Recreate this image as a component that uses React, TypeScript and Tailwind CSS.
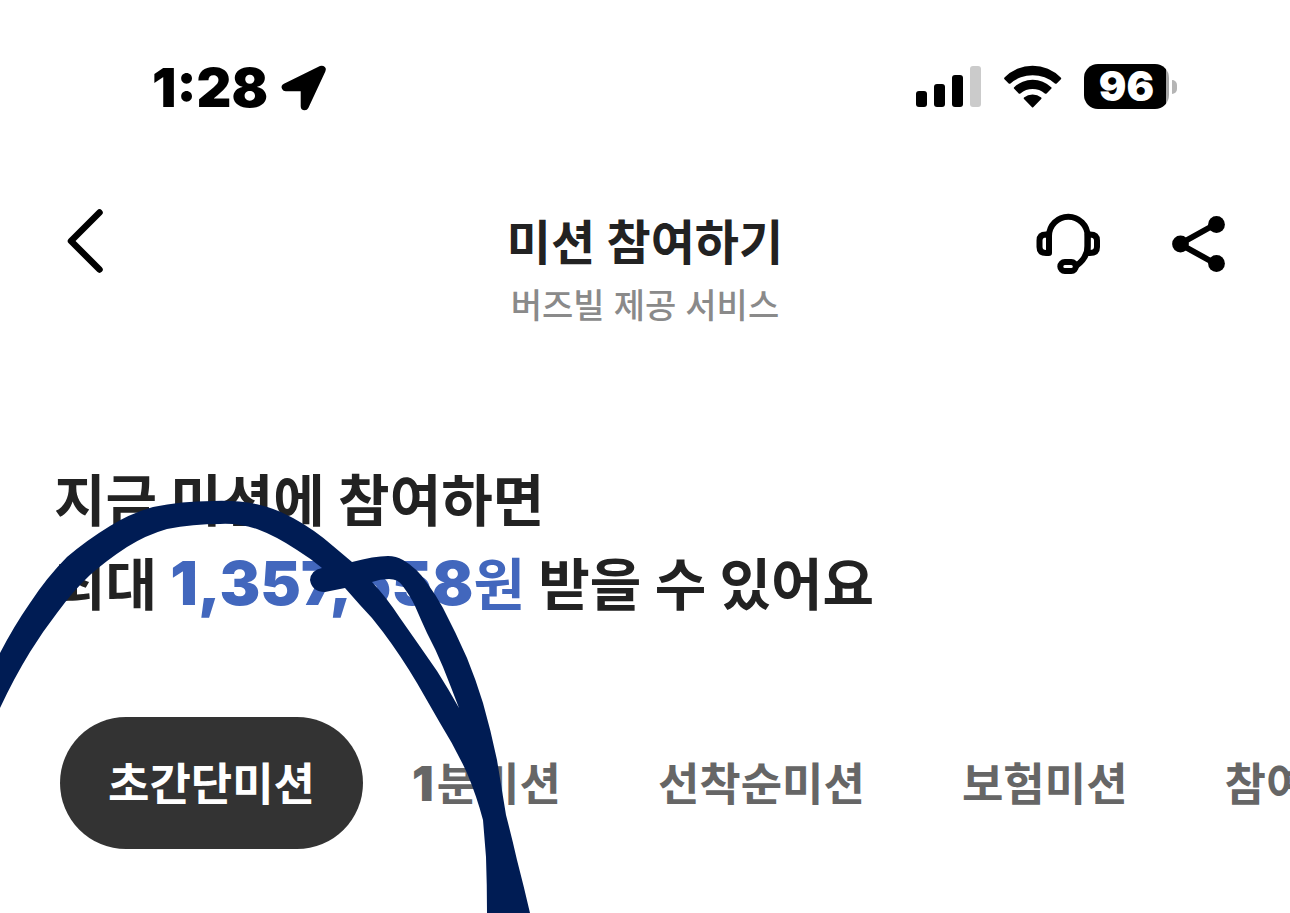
import { useState } from "react";

const TABS = ["초간단미션", "1분미션", "선착순미션", "보험미션", "참여미션"];

function StatusBar() {
  return (
    <div className="flex h-[176px] items-center justify-between pl-[152px] pr-[113px] text-black">
      <div className="flex items-center gap-3">
        <span className="text-[54px] leading-[64px] font-black">1:28</span>
        <svg width="48" height="48" viewBox="0 0 48 48" aria-hidden="true">
          <path
            d="M41.7 5.7 5.7 23.3H24.7V42.3Z"
            fill="currentColor"
            stroke="currentColor"
            strokeWidth="8"
            strokeLinejoin="round"
          />
        </svg>
      </div>

      <div className="flex items-center pb-[3px]">
        <svg className="mr-[22px]" width="66" height="42" viewBox="0 0 66 42" aria-hidden="true">
          <rect x="1" y="25" width="11" height="16" rx="3" />
          <rect x="19" y="18" width="11" height="23" rx="3" />
          <rect x="37" y="9" width="11" height="32" rx="3" />
          <rect x="55" y="0" width="11" height="41" rx="3" fill="#cbcbcb" />
        </svg>
        <svg className="mr-[21px]" width="60" height="44" viewBox="0 0 60 44" aria-hidden="true">
          <path d="M1.5 12.6A39 39 0 0 1 57.7 12.6Q58.7 13.4 57.9 14.2L53.7 18.4Q52.9 19.2 51.9 18.4A34 34 0 0 0 7.5 18.4Q6.5 19.2 5.7 18.4L1.5 14.2Q.7 13.4 1.5 12.6Z" />
          <path d="M11.2 22.2A26.5 26.5 0 0 1 48.2 22.2Q49 22.9 48.2 23.7L43.6 28.5Q42.8 29.2 41.8 28.5A19 19 0 0 0 17.4 28.5Q16.5 29.2 15.7 28.5L11.2 23.7Q10.4 22.9 11.2 22.2Z" />
          <path d="M21 32.6A13.5 13.5 0 0 1 38.2 32.6Q39 33.3 38.2 34.1L30.2 42.2Q29.6 42.7 29 42.2L21 34.1Q20.2 33.3 21 32.6Z" />
        </svg>
        <div className="flex h-[45px] w-[85px] items-center justify-center rounded-[14px] bg-[linear-gradient(to_right,#000_96%,#a6a6a6_96%)] text-[41px] font-black text-white">
          96
        </div>
        <div className="ml-[3px] h-[14px] w-[5px] rounded-r-full bg-[#b5b5b5]" />
      </div>
    </div>
  );
}

function Header() {
  return (
    <header className="grid grid-cols-[1fr_auto_1fr] items-start px-16 pt-[31px]">
      <button aria-label="뒤로" className="w-10 text-black">
        <svg width="40" height="68" viewBox="0 0 40 68" fill="none">
          <path
            d="M35.5 5.5 7 34 35.5 62.5"
            stroke="currentColor"
            strokeWidth="6.5"
            strokeLinecap="round"
            strokeLinejoin="round"
          />
        </svg>
      </button>

      <div className="pt-px text-center">
        <h1 className="text-[48px] leading-[70px] font-bold text-[#222]">미션 참여하기</h1>
        <p className="text-[34px] leading-[56px] font-medium text-[#8a8a8a]">버즈빌 제공 서비스</p>
      </div>

      <div className="flex items-center justify-end gap-[69px] pt-[5px] text-black">
        <button aria-label="고객센터">
          <svg width="66" height="64" viewBox="0 0 66 64" fill="none" stroke="currentColor" strokeWidth="6" strokeLinejoin="round">
            <path d="M14 41V24A19.3 19.3 0 0 1 52.6 24V34C52.6 43 48 49 41 54" />
            <path d="M14 22.5H11Q4.5 22.5 4.5 28.5V35Q4.5 41 11 41H14Z" />
            <path d="M52.6 22.5H55Q62 22.5 62 28.5V35Q62 41 55 41H52.6Z" />
            <rect x="25.3" y="50" width="15.5" height="9" rx="4.5" />
          </svg>
        </button>
        <button aria-label="공유">
          <svg width="56" height="60" viewBox="0 0 56 60">
            <path d="M45 10.5 10 30 45 49.5" fill="none" stroke="currentColor" strokeWidth="6" />
            <circle cx="10.5" cy="30" r="8.4" />
            <circle cx="46.5" cy="10.5" r="8.4" />
            <circle cx="46.5" cy="49.5" r="8.4" />
          </svg>
        </button>
      </div>
    </header>
  );
}

// 펜으로 그린 동그라미
function PenStroke() {
  return (
    <svg
      className="pointer-events-none absolute left-0 top-0"
      width="540"
      height="913"
      viewBox="0 0 540 913"
      fill="#001c54"
      aria-hidden="true"
    >
      <path
        fillRule="evenodd"
        d="M0 653Q14 626 30 603Q47 577 67 557Q87 540 110 526Q131 513 153 507Q181 501 213 501Q239 500 260 505Q277 509 293 518Q315 530 333 546L352 562Q374 556 388 556Q396 556 403 560Q417 568 427 583Q436 595 443 608Q456 633 467 658Q476 680 483 703Q491 731 497 760L506 815Q512 838 517 860Q524 887 530 913H487Q487 885 486 857L483 820Q477 797 467 773Q455 747 440 723L417 683Q401 656 383 632Q372 617 360 605L345 588L325 592Q312 592 310 580Q311 570 322 568Q310 558 297 550Q276 536 257 529Q238 523 220 524Q193 524 167 529Q146 535 127 547Q107 560 90 575Q73 591 57 613Q43 631 30 652Q14 678 0 708Z
           M372 582Q380 579 389 579Q398 579 402 585Q411 597 415 606Q421 620 427 633Q436 650 443 667Q451 687 459 708Q449 690 437 671Q419 645 400 618Q387 598 372 582Z"
      />
    </svg>
  );
}

export default function App() {
  const [active, setActive] = useState(TABS[0]);

  return (
    <div className="relative min-h-screen overflow-hidden bg-white font-['Inter','Noto_Sans_CJK_KR',sans-serif]">
      <StatusBar />
      <Header />

      <main className="pt-[125px]">
        <h2 className="pl-[54px] text-[56px] leading-[84px] font-bold text-[#222]">
          지금 미션에 참여하면
          <br />
          최대{" "}
          <span className="text-[#4267bd]">
            <span className="text-[61px] leading-none font-black">1,357,658</span>원
          </span>{" "}
          받을 수 있어요
        </h2>

        <nav className="mt-[90px] flex gap-px overflow-hidden pl-[60px] text-[45px] leading-[66px] font-bold">
          {TABS.map((tab) => (
            <button
              key={tab}
              onClick={() => setActive(tab)}
              className={`h-[132px] shrink-0 rounded-full px-12 pt-1 whitespace-nowrap ${
                active === tab ? "bg-[#333] text-white" : "text-[#666]"
              }`}
            >
              {tab.startsWith("1") ? (
                <>
                  <span className="mr-[3px] text-[48px] leading-none font-black">1</span>
                  {tab.slice(1)}
                </>
              ) : (
                tab
              )}
            </button>
          ))}
        </nav>
      </main>

      <PenStroke />
    </div>
  );
}
